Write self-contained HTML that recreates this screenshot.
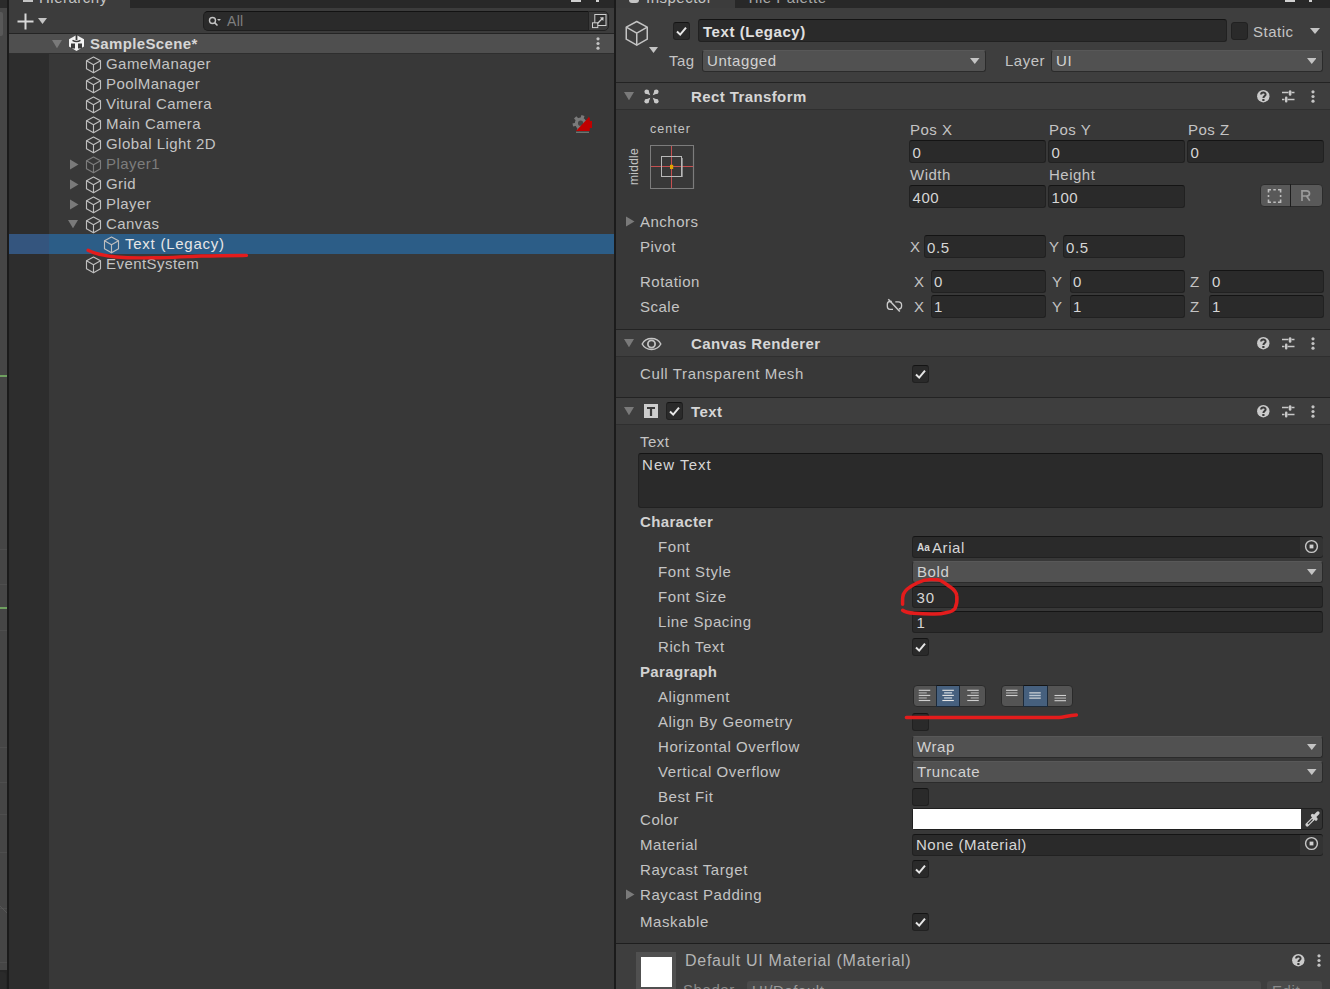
<!DOCTYPE html>
<html><head><meta charset="utf-8"><style>
html,body{margin:0;padding:0;}
body{width:1330px;height:989px;overflow:hidden;position:relative;background:#383838;font-family:"Liberation Sans", sans-serif;}
body>div,body>span,body>svg{position:absolute;}
.t{white-space:nowrap;}
</style></head><body>
<div style="left:0px;top:0px;width:9px;height:989px;background:#1b1b1b;"></div>
<div style="left:0px;top:0px;width:7px;height:989px;background:#464646;"></div>
<div style="left:0px;top:0px;width:7px;height:8px;background:#2b2b2b;"></div>
<div style="left:0px;top:8px;width:7px;height:32px;background:#474747;"></div>
<div style="left:0px;top:12px;width:3px;height:24px;background:#585858;border-radius:0 2px 2px 0;"></div>
<div style="left:0px;top:549px;width:7px;height:1px;background:#4e4e4e;"></div>
<div style="left:0px;top:584px;width:7px;height:1px;background:#4e4e4e;"></div>
<div style="left:0px;top:630px;width:7px;height:1px;background:#4e4e4e;"></div>
<div style="left:0px;top:747px;width:7px;height:1px;background:#4e4e4e;"></div>
<div style="left:0px;top:782px;width:7px;height:1px;background:#4e4e4e;"></div>
<div style="left:0px;top:814px;width:7px;height:1px;background:#4e4e4e;"></div>
<div style="left:0px;top:852px;width:7px;height:1px;background:#4e4e4e;"></div>
<div style="left:0px;top:908px;width:7px;height:1px;background:#4e4e4e;"></div>
<div style="left:0px;top:962px;width:7px;height:1px;background:#4e4e4e;"></div>
<div style="left:0px;top:375px;width:7px;height:1.5px;background:#6fa060;"></div>
<div style="left:0px;top:607px;width:7px;height:1.5px;background:#6fa060;"></div>
<div style="left:0px;top:970px;width:7px;height:19px;background:#262626;"></div>
<div style="left:0px;top:972px;width:6px;height:17px;background:#2a2a2a;border-radius:0 3px 0 0;"></div>
<svg style="left:0px;top:900px;" width="7" height="20" viewBox="0 0 7 20"><path d="M0 6 L7 13" stroke="#595959" stroke-width="0.8"/></svg>
<div style="left:9px;top:0px;width:604.5px;height:989px;background:#383838;"></div>
<div style="left:9px;top:0px;width:604.5px;height:8px;background:#282828;"></div>
<div style="left:9px;top:0px;width:121px;height:8px;background:#3c3c3c;"></div>
<span class="t" style="left:39px;top:-10.58px;font-size:15px;line-height:17.23px;color:#c4c4c4;font-weight:normal;letter-spacing:0.5px;">Hierarchy</span>
<div style="left:23px;top:0px;width:10px;height:2px;background:#c4c4c4;"></div>
<div style="left:571px;top:0px;width:10px;height:2px;background:#d0d0d0;"></div>
<div style="left:596px;top:0px;width:3px;height:2px;background:#d0d0d0;"></div>
<div style="left:9px;top:8px;width:604.5px;height:25px;background:#3c3c3c;"></div>
<svg style="left:17px;top:13px;" width="17" height="17" viewBox="0 0 17 17"><path d="M8.5 0.5 V16.5 M0.5 8.5 H16.5" stroke="#d8d8d8" stroke-width="2"/></svg>
<svg style="left:38px;top:18px;" width="9" height="6" viewBox="0 0 9 6"><path d="M0 0 L9 0 L4.5 6 Z" fill="#c4c4c4"/></svg>
<div style="left:203px;top:11px;width:386px;height:20px;background:#2a2a2a;border:1px solid #1f1f1f;border-top-color:#121212;box-sizing:border-box;border-radius:5px 0 0 5px;"></div>
<div style="left:588px;top:11px;width:21px;height:20px;background:#3a3a3a;border-radius:0 5px 5px 0;border:1px solid #222;box-sizing:border-box;"></div>
<svg style="left:208px;top:16px;" width="14" height="11" viewBox="0 0 14 11"><circle cx="4.5" cy="4.5" r="3" stroke="#c4c4c4" stroke-width="1.4" fill="none"/><path d="M6.6 6.6 L9.5 9.5" stroke="#c4c4c4" stroke-width="1.6"/><path d="M9 3 L13 3 L11 5 Z" fill="#c4c4c4"/></svg>
<span class="t" style="left:227px;top:13.33px;font-size:14px;line-height:16.09px;color:#7f7f7f;font-weight:normal;letter-spacing:0.3px;">All</span>
<svg style="left:591px;top:13px;" width="17" height="17" viewBox="0 0 17 17"><rect x="3.8" y="1.5" width="11.2" height="11" stroke="#cfcfcf" stroke-width="1" fill="#2e2e2e"/><rect x="1.5" y="9.8" width="5.3" height="4.8" stroke="#cfcfcf" stroke-width="1" fill="#3a3a3a"/><path d="M6.5 10.5 L11.8 5" stroke="#cfcfcf" stroke-width="1.2"/><path d="M8.8 4.5 L12.6 4.2 L12.3 8 Z" fill="#cfcfcf"/></svg>
<div style="left:9px;top:32.5px;width:604.5px;height:1.5px;background:#242424;"></div>
<div style="left:9px;top:34px;width:604.5px;height:19px;background:#4f4f4f;"></div>
<div style="left:9px;top:53px;width:604.5px;height:1px;background:#2e2e2e;"></div>
<svg style="left:52px;top:40px;" width="10" height="8" viewBox="0 0 10 8"><path d="M0 0 L10 0 L5 8.3 Z" fill="#7a7a7a"/></svg>
<svg style="left:68px;top:34px;" width="17" height="18" viewBox="0 0 17 18"><path d="M8.5 1 L16 5.3 L16 12.5 L8.5 17 L1 12.5 L1 5.3 Z" fill="#f2f2f2"/><g fill="#3a3a3a"><rect x="7.6" y="0.5" width="1.8" height="5.5"/><rect x="3" y="9.5" width="4" height="5"/><rect x="10" y="9.5" width="4" height="5"/></g><path d="M4.5 6.3 Q8.5 8.6 12.5 6.3" stroke="#3a3a3a" stroke-width="1.5" fill="none"/></svg>
<span class="t" style="left:90px;top:35.12px;font-size:15px;line-height:17.23px;color:#d6d6d6;font-weight:bold;letter-spacing:0.35px;">SampleScene*</span>
<svg style="left:596px;top:37px;" width="4" height="13" viewBox="0 0 4 13"><g fill="#c4c4c4"><circle cx="2" cy="1.8" r="1.6"/><circle cx="2" cy="6.5" r="1.6"/><circle cx="2" cy="11.2" r="1.6"/></g></svg>
<div style="left:9px;top:54px;width:40px;height:935px;background:#2d2d2d;"></div>
<svg style="left:84.6px;top:55.6px;" width="17.0" height="18.0" viewBox="0 0 17.0 18.0"><g transform="scale(1.0)" fill="none" stroke="#bfbfbf" stroke-width="1.15" stroke-linejoin="round"><path d="M8.5 1 L15.5 4.8 L15.5 12.8 L8.5 16.8 L1.5 12.8 L1.5 4.8 Z"/><path d="M1.5 4.8 L8.5 8.8 L15.5 4.8 M8.5 8.8 L8.5 16.8"/></g></svg>
<span class="t" style="left:106px;top:55.42px;font-size:15px;line-height:17.23px;color:#c4c4c4;font-weight:normal;letter-spacing:0.45px;">GameManager</span>
<svg style="left:84.6px;top:75.6px;" width="17.0" height="18.0" viewBox="0 0 17.0 18.0"><g transform="scale(1.0)" fill="none" stroke="#bfbfbf" stroke-width="1.15" stroke-linejoin="round"><path d="M8.5 1 L15.5 4.8 L15.5 12.8 L8.5 16.8 L1.5 12.8 L1.5 4.8 Z"/><path d="M1.5 4.8 L8.5 8.8 L15.5 4.8 M8.5 8.8 L8.5 16.8"/></g></svg>
<span class="t" style="left:106px;top:75.42px;font-size:15px;line-height:17.23px;color:#c4c4c4;font-weight:normal;letter-spacing:0.45px;">PoolManager</span>
<svg style="left:84.6px;top:95.6px;" width="17.0" height="18.0" viewBox="0 0 17.0 18.0"><g transform="scale(1.0)" fill="none" stroke="#bfbfbf" stroke-width="1.15" stroke-linejoin="round"><path d="M8.5 1 L15.5 4.8 L15.5 12.8 L8.5 16.8 L1.5 12.8 L1.5 4.8 Z"/><path d="M1.5 4.8 L8.5 8.8 L15.5 4.8 M8.5 8.8 L8.5 16.8"/></g></svg>
<span class="t" style="left:106px;top:95.42px;font-size:15px;line-height:17.23px;color:#c4c4c4;font-weight:normal;letter-spacing:0.45px;">Vitural Camera</span>
<svg style="left:84.6px;top:115.6px;" width="17.0" height="18.0" viewBox="0 0 17.0 18.0"><g transform="scale(1.0)" fill="none" stroke="#bfbfbf" stroke-width="1.15" stroke-linejoin="round"><path d="M8.5 1 L15.5 4.8 L15.5 12.8 L8.5 16.8 L1.5 12.8 L1.5 4.8 Z"/><path d="M1.5 4.8 L8.5 8.8 L15.5 4.8 M8.5 8.8 L8.5 16.8"/></g></svg>
<span class="t" style="left:106px;top:115.42px;font-size:15px;line-height:17.23px;color:#c4c4c4;font-weight:normal;letter-spacing:0.45px;">Main Camera</span>
<svg style="left:84.6px;top:135.6px;" width="17.0" height="18.0" viewBox="0 0 17.0 18.0"><g transform="scale(1.0)" fill="none" stroke="#bfbfbf" stroke-width="1.15" stroke-linejoin="round"><path d="M8.5 1 L15.5 4.8 L15.5 12.8 L8.5 16.8 L1.5 12.8 L1.5 4.8 Z"/><path d="M1.5 4.8 L8.5 8.8 L15.5 4.8 M8.5 8.8 L8.5 16.8"/></g></svg>
<span class="t" style="left:106px;top:135.43px;font-size:15px;line-height:17.23px;color:#c4c4c4;font-weight:normal;letter-spacing:0.45px;">Global Light 2D</span>
<svg style="left:70px;top:159px;" width="9" height="11" viewBox="0 0 9 11"><path d="M0 0.5 L8.5 5.5 L0 10.5 Z" fill="#7a7a7a"/></svg>
<svg style="left:84.6px;top:155.6px;" width="17.0" height="18.0" viewBox="0 0 17.0 18.0"><g transform="scale(1.0)" fill="none" stroke="#7d7d7d" stroke-width="1.15" stroke-linejoin="round"><path d="M8.5 1 L15.5 4.8 L15.5 12.8 L8.5 16.8 L1.5 12.8 L1.5 4.8 Z"/><path d="M1.5 4.8 L8.5 8.8 L15.5 4.8 M8.5 8.8 L8.5 16.8"/></g></svg>
<span class="t" style="left:106px;top:155.43px;font-size:15px;line-height:17.23px;color:#7d7d7d;font-weight:normal;letter-spacing:0.45px;">Player1</span>
<svg style="left:70px;top:179px;" width="9" height="11" viewBox="0 0 9 11"><path d="M0 0.5 L8.5 5.5 L0 10.5 Z" fill="#7a7a7a"/></svg>
<svg style="left:84.6px;top:175.6px;" width="17.0" height="18.0" viewBox="0 0 17.0 18.0"><g transform="scale(1.0)" fill="none" stroke="#bfbfbf" stroke-width="1.15" stroke-linejoin="round"><path d="M8.5 1 L15.5 4.8 L15.5 12.8 L8.5 16.8 L1.5 12.8 L1.5 4.8 Z"/><path d="M1.5 4.8 L8.5 8.8 L15.5 4.8 M8.5 8.8 L8.5 16.8"/></g></svg>
<span class="t" style="left:106px;top:175.43px;font-size:15px;line-height:17.23px;color:#c4c4c4;font-weight:normal;letter-spacing:0.45px;">Grid</span>
<svg style="left:70px;top:199px;" width="9" height="11" viewBox="0 0 9 11"><path d="M0 0.5 L8.5 5.5 L0 10.5 Z" fill="#7a7a7a"/></svg>
<svg style="left:84.6px;top:195.6px;" width="17.0" height="18.0" viewBox="0 0 17.0 18.0"><g transform="scale(1.0)" fill="none" stroke="#bfbfbf" stroke-width="1.15" stroke-linejoin="round"><path d="M8.5 1 L15.5 4.8 L15.5 12.8 L8.5 16.8 L1.5 12.8 L1.5 4.8 Z"/><path d="M1.5 4.8 L8.5 8.8 L15.5 4.8 M8.5 8.8 L8.5 16.8"/></g></svg>
<span class="t" style="left:106px;top:195.43px;font-size:15px;line-height:17.23px;color:#c4c4c4;font-weight:normal;letter-spacing:0.45px;">Player</span>
<svg style="left:68px;top:220px;" width="10" height="8" viewBox="0 0 10 8"><path d="M0 0 L10 0 L5 8.3 Z" fill="#7a7a7a"/></svg>
<svg style="left:84.6px;top:215.6px;" width="17.0" height="18.0" viewBox="0 0 17.0 18.0"><g transform="scale(1.0)" fill="none" stroke="#bfbfbf" stroke-width="1.15" stroke-linejoin="round"><path d="M8.5 1 L15.5 4.8 L15.5 12.8 L8.5 16.8 L1.5 12.8 L1.5 4.8 Z"/><path d="M1.5 4.8 L8.5 8.8 L15.5 4.8 M8.5 8.8 L8.5 16.8"/></g></svg>
<span class="t" style="left:106px;top:215.43px;font-size:15px;line-height:17.23px;color:#c4c4c4;font-weight:normal;letter-spacing:0.45px;">Canvas</span>
<div style="left:9px;top:234px;width:604.5px;height:20px;background:#2c5d87;"></div>
<div style="left:9px;top:234px;width:40px;height:20px;background:#34557e;"></div>
<svg style="left:102.6px;top:235.6px;" width="17.0" height="18.0" viewBox="0 0 17.0 18.0"><g transform="scale(1.0)" fill="none" stroke="#bfbfbf" stroke-width="1.15" stroke-linejoin="round"><path d="M8.5 1 L15.5 4.8 L15.5 12.8 L8.5 16.8 L1.5 12.8 L1.5 4.8 Z"/><path d="M1.5 4.8 L8.5 8.8 L15.5 4.8 M8.5 8.8 L8.5 16.8"/></g></svg>
<span class="t" style="left:125px;top:235.43px;font-size:15px;line-height:17.23px;color:#e6e6e6;font-weight:normal;letter-spacing:0.75px;">Text (Legacy)</span>
<svg style="left:84.6px;top:255.6px;" width="17.0" height="18.0" viewBox="0 0 17.0 18.0"><g transform="scale(1.0)" fill="none" stroke="#bfbfbf" stroke-width="1.15" stroke-linejoin="round"><path d="M8.5 1 L15.5 4.8 L15.5 12.8 L8.5 16.8 L1.5 12.8 L1.5 4.8 Z"/><path d="M1.5 4.8 L8.5 8.8 L15.5 4.8 M8.5 8.8 L8.5 16.8"/></g></svg>
<span class="t" style="left:106px;top:255.43px;font-size:15px;line-height:17.23px;color:#c4c4c4;font-weight:normal;letter-spacing:0.45px;">EventSystem</span>
<svg style="left:570px;top:112px;" width="25" height="24" viewBox="0 0 25 24"><g transform="translate(10.6 11.2)" fill="#7a7a7a"><circle r="5.8"/><rect x="-1.6" y="-8" width="3.2" height="3.5" transform="rotate(17.188733853924695)"/><rect x="-1.6" y="-8" width="3.2" height="3.5" transform="rotate(77.18873385392469)"/><rect x="-1.6" y="-8" width="3.2" height="3.5" transform="rotate(137.18873385392467)"/><rect x="-1.6" y="-8" width="3.2" height="3.5" transform="rotate(197.18873385392467)"/><rect x="-1.6" y="-8" width="3.2" height="3.5" transform="rotate(257.18873385392465)"/><rect x="-1.6" y="-8" width="3.2" height="3.5" transform="rotate(317.1887338539247)"/></g><circle cx="10.6" cy="11.2" r="2.6" fill="#454545"/><path d="M6 19 L18.5 5.6 L18.5 4.6 L19.8 6 L19.8 9 L22 9 L22 16 L19.8 16 L19.8 19 Z" fill="#c00000"/><path d="M6 20.3 H19" stroke="#6e7470" stroke-width="1.4"/></svg>
<svg style="left:0px;top:0px;pointer-events:none;" width="1330" height="989" viewBox="0 0 1330 989"><path d="M88.1 250.3 C 95 254, 110 257, 127.4 257.7 C 140 258, 150 257.8, 161.2 257.7 C 180 257.2, 190 256.4, 201.8 256 C 220 255.6, 235 255.5, 246.4 255.4" stroke="#e41c1c" stroke-width="3.4" fill="none" stroke-linecap="round"/></svg>
<div style="left:613.5px;top:0px;width:2.5px;height:989px;background:#1b1b1b;"></div>
<div style="left:616px;top:0px;width:714px;height:989px;background:#383838;"></div>
<div style="left:616px;top:0px;width:714px;height:8px;background:#282828;"></div>
<div style="left:616px;top:0px;width:119px;height:8px;background:#3c3c3c;"></div>
<span class="t" style="left:646px;top:-10.58px;font-size:15px;line-height:17.23px;color:#c4c4c4;font-weight:normal;letter-spacing:0.5px;">Inspector</span>
<div style="left:629px;top:0px;width:10px;height:3px;background:#c4c4c4;border-radius:0 0 5px 5px;"></div>
<span class="t" style="left:746px;top:-10.58px;font-size:15px;line-height:17.23px;color:#a8a8a8;font-weight:normal;letter-spacing:0.5px;">Tile Palette</span>
<div style="left:1285px;top:0px;width:10px;height:2px;background:#d0d0d0;"></div>
<div style="left:1309px;top:0px;width:3px;height:2px;background:#d0d0d0;"></div>
<div style="left:616px;top:8px;width:714px;height:74px;background:#3e3e3e;"></div>
<svg style="left:624px;top:20px;" width="25.5" height="27.0" viewBox="0 0 25.5 27.0"><g transform="scale(1.5)" fill="none" stroke="#c4c4c4" stroke-width="1.0" stroke-linejoin="round"><path d="M8.5 1 L15.5 4.8 L15.5 12.8 L8.5 16.8 L1.5 12.8 L1.5 4.8 Z"/><path d="M1.5 4.8 L8.5 8.8 L15.5 4.8 M8.5 8.8 L8.5 16.8"/></g></svg>
<svg style="left:649px;top:47px;" width="9" height="6" viewBox="0 0 9 6"><path d="M0 0 L9 0 L4.5 6 Z" fill="#c4c4c4"/></svg>
<div style="left:673px;top:22px;width:17px;height:18px;background:#2a2a2a;border:1px solid #212121;border-top-color:#141414;box-sizing:border-box;border-radius:3px;"></div>
<svg style="left:673px;top:22px;" width="17" height="18" viewBox="0 0 17 18"><path d="M4 9.5 L7.2 12.6 L13 5.6" stroke="#e6e6e6" stroke-width="2" fill="none"/></svg>
<div style="left:698px;top:19px;width:529px;height:22.5px;background:#2a2a2a;border:1px solid #212121;border-top-color:#141414;box-sizing:border-box;border-radius:3px;"></div>
<span class="t" style="left:703px;top:23.42px;font-size:15px;line-height:17.23px;color:#e0e0e0;font-weight:bold;letter-spacing:0.55px;">Text (Legacy)</span>
<div style="left:1231px;top:22px;width:17px;height:18px;background:#2a2a2a;border:1px solid #212121;box-sizing:border-box;border-radius:3px;"></div>
<span class="t" style="left:1253px;top:23.42px;font-size:15px;line-height:17.23px;color:#c4c4c4;font-weight:normal;letter-spacing:0.5px;">Static</span>
<svg style="left:1310px;top:28px;" width="10" height="6" viewBox="0 0 10 6"><path d="M0 0 L10 0 L5.0 6 Z" fill="#c4c4c4"/></svg>
<span class="t" style="left:669px;top:52.42px;font-size:15px;line-height:17.23px;color:#c4c4c4;font-weight:normal;letter-spacing:0.5px;">Tag</span>
<div style="left:702px;top:50px;width:284px;height:21.5px;background:#515151;border:1px solid #2b2b2b;box-sizing:border-box;border-radius:3px;border-top-color:#585858;"></div>
<svg style="left:970px;top:57.75px;" width="9.5" height="6" viewBox="0 0 9.5 6"><path d="M0 0 L9.5 0 L4.75 6 Z" fill="#c4c4c4"/></svg>
<span class="t" style="left:707px;top:52.42px;font-size:15px;line-height:17.23px;color:#d2d2d2;font-weight:normal;letter-spacing:0.58px;">Untagged</span>
<span class="t" style="left:1005px;top:52.42px;font-size:15px;line-height:17.23px;color:#c4c4c4;font-weight:normal;letter-spacing:0.5px;">Layer</span>
<div style="left:1051px;top:50px;width:271.5px;height:21.5px;background:#515151;border:1px solid #2b2b2b;box-sizing:border-box;border-radius:3px;border-top-color:#585858;"></div>
<svg style="left:1306.5px;top:57.75px;" width="9.5" height="6" viewBox="0 0 9.5 6"><path d="M0 0 L9.5 0 L4.75 6 Z" fill="#c4c4c4"/></svg>
<span class="t" style="left:1056px;top:52.42px;font-size:15px;line-height:17.23px;color:#d2d2d2;font-weight:normal;letter-spacing:0.58px;">UI</span>
<div style="left:616px;top:82px;width:714px;height:1px;background:#232323;"></div>
<div style="left:616px;top:83px;width:714px;height:27px;background:#3e3e3e;"></div>
<div style="left:616px;top:109px;width:714px;height:1px;background:#2f2f2f;"></div>
<svg style="left:624px;top:92px;" width="10" height="8" viewBox="0 0 10 8"><path d="M0 0 L10 0 L5 8.3 Z" fill="#7a7a7a"/></svg>
<svg style="left:643.6px;top:88.6px;" width="15" height="15" viewBox="0 0 15 15"><g fill="#c8c8c8"><circle cx="2.7" cy="2.7" r="2.3"/><path d="M1.1443650813895956 4.255634918610404 L6.3 6.3 L4.255634918610404 1.1443650813895956 Z"/><circle cx="12.3" cy="2.7" r="2.3"/><path d="M10.744365081389596 1.1443650813895951 L8.7 6.3 L13.855634918610406 4.255634918610405 Z"/><circle cx="2.7" cy="12.3" r="2.3"/><path d="M4.255634918610405 13.855634918610406 L6.3 8.7 L1.1443650813895951 10.744365081389596 Z"/><circle cx="12.3" cy="12.3" r="2.3"/><path d="M13.855634918610406 10.744365081389596 L8.7 8.7 L10.744365081389596 13.855634918610406 Z"/></g></svg>
<span class="t" style="left:691px;top:88.42px;font-size:15px;line-height:17.23px;color:#d6d6d6;font-weight:bold;letter-spacing:0.4px;">Rect Transform</span>
<svg style="left:1257px;top:90px;" width="13" height="13" viewBox="0 0 13 13"><circle cx="6.3" cy="6.2" r="6.2" fill="#cacaca"/><path d="M4.1 4.6 C4.1 1.9 8.6 1.9 8.6 4.4 C8.6 6 6.4 6 6.4 8" stroke="#3a3a3a" stroke-width="2" fill="none"/><rect x="5.3" y="9" width="2.2" height="2" fill="#3a3a3a"/></svg>
<svg style="left:1282px;top:90px;" width="13" height="13" viewBox="0 0 13 13"><g fill="#c8c8c8"><path d="M0 2.5 H6.5 M9.5 2.5 H12.5 M0 9.5 H2.5 M5.5 9.5 H12.5" stroke="#c8c8c8" stroke-width="1.5"/><rect x="6.8" y="0.2" width="2.6" height="5.6" rx="1.2"/><rect x="3" y="6.4" width="2.4" height="6" rx="1"/></g></svg>
<svg style="left:1311px;top:90px;" width="4" height="13" viewBox="0 0 4 13"><g fill="#c4c4c4"><circle cx="2" cy="1.8" r="1.6"/><circle cx="2" cy="6.5" r="1.6"/><circle cx="2" cy="11.2" r="1.6"/></g></svg>
<span class="t" style="left:650px;top:122.19px;font-size:12.5px;line-height:14.36px;color:#c4c4c4;font-weight:normal;letter-spacing:1.05px;">center</span>
<span class="t" style="left:604.4px;top:160.3px;width:60px;text-align:center;font-size:12px;line-height:13px;color:#c4c4c4;letter-spacing:0.25px;transform:rotate(-90deg);">middle</span>
<svg style="left:650px;top:145px;" width="45" height="45" viewBox="0 0 45 45"><rect x="0.5" y="0.5" width="43" height="43" stroke="#7c7c7c" fill="none"/><path d="M43.5 3 V44" stroke="#7c7c7c" stroke-width="1.2"/><path d="M21.5 1 V43 M1 21.5 H43" stroke="#c65050" stroke-width="1"/><rect x="11.5" y="11.5" width="20" height="20" stroke="#b8b8b8" stroke-width="1" fill="none"/><path d="M32 13 V32" stroke="#b8b8b8" stroke-width="1.3"/><rect x="20" y="19.8" width="3.2" height="4.2" fill="#e2a200"/></svg>
<span class="t" style="left:910px;top:121.23px;font-size:15px;line-height:17.23px;color:#c4c4c4;font-weight:normal;letter-spacing:0.5px;">Pos X</span>
<span class="t" style="left:1049px;top:121.23px;font-size:15px;line-height:17.23px;color:#c4c4c4;font-weight:normal;letter-spacing:0.5px;">Pos Y</span>
<span class="t" style="left:1188px;top:121.23px;font-size:15px;line-height:17.23px;color:#c4c4c4;font-weight:normal;letter-spacing:0.5px;">Pos Z</span>
<div style="left:909px;top:140px;width:136.5px;height:22.5px;background:#2a2a2a;border:1px solid #212121;border-top-color:#141414;box-sizing:border-box;border-radius:3px;"></div>
<span class="t" style="left:912.5px;top:144.43px;font-size:15px;line-height:17.23px;color:#d6d6d6;font-weight:normal;letter-spacing:0.58px;">0</span>
<div style="left:1048px;top:140px;width:136.5px;height:22.5px;background:#2a2a2a;border:1px solid #212121;border-top-color:#141414;box-sizing:border-box;border-radius:3px;"></div>
<span class="t" style="left:1051.5px;top:144.43px;font-size:15px;line-height:17.23px;color:#d6d6d6;font-weight:normal;letter-spacing:0.58px;">0</span>
<div style="left:1187px;top:140px;width:136.5px;height:22.5px;background:#2a2a2a;border:1px solid #212121;border-top-color:#141414;box-sizing:border-box;border-radius:3px;"></div>
<span class="t" style="left:1190.5px;top:144.43px;font-size:15px;line-height:17.23px;color:#d6d6d6;font-weight:normal;letter-spacing:0.58px;">0</span>
<span class="t" style="left:910px;top:166.23px;font-size:15px;line-height:17.23px;color:#c4c4c4;font-weight:normal;letter-spacing:0.5px;">Width</span>
<span class="t" style="left:1049px;top:166.23px;font-size:15px;line-height:17.23px;color:#c4c4c4;font-weight:normal;letter-spacing:0.5px;">Height</span>
<div style="left:909px;top:185px;width:136.5px;height:23px;background:#2a2a2a;border:1px solid #212121;border-top-color:#141414;box-sizing:border-box;border-radius:3px;"></div>
<span class="t" style="left:912.5px;top:189.43px;font-size:15px;line-height:17.23px;color:#d6d6d6;font-weight:normal;letter-spacing:0.58px;">400</span>
<div style="left:1048px;top:185px;width:136.5px;height:23px;background:#2a2a2a;border:1px solid #212121;border-top-color:#141414;box-sizing:border-box;border-radius:3px;"></div>
<span class="t" style="left:1051.5px;top:189.43px;font-size:15px;line-height:17.23px;color:#d6d6d6;font-weight:normal;letter-spacing:0.58px;">100</span>
<div style="left:1260px;top:183.6px;width:63.2px;height:23.6px;background:#595959;border-radius:4px;border:1px solid #2c2c2c;box-sizing:border-box;"></div>
<div style="left:1289.5px;top:184px;width:1.1px;height:23px;background:#1e1e1e;"></div>
<svg style="left:1266px;top:188px;" width="17" height="16" viewBox="0 0 17 16"><g stroke="#bdbdbd" stroke-width="1.6" fill="none"><path d="M2.5 4.5 V1.8 H5"/><path d="M12 1.8 H14.6 V4.5"/><path d="M14.6 11.5 V14.2 H12"/><path d="M5 14.2 H2.5 V11.5"/><path d="M7.3 1.8 H9.8 M7.3 14.2 H9.8 M2.5 7 V9 M14.6 7 V9"/></g></svg>
<svg style="left:1298px;top:188px;" width="16" height="16" viewBox="0 0 16 16"><path d="M4 13 V2.8 H8.5 Q11.5 2.8 11.5 5.5 Q11.5 8 8.5 8 H4 M8.5 8 L11.8 12.8" stroke="#9c9c9c" stroke-width="1.7" fill="none"/></svg>
<svg style="left:626px;top:216px;" width="9" height="11" viewBox="0 0 9 11"><path d="M0 0.5 L8.5 5.5 L0 10.5 Z" fill="#7a7a7a"/></svg>
<span class="t" style="left:640px;top:213.43px;font-size:15px;line-height:17.23px;color:#c4c4c4;font-weight:normal;letter-spacing:0.5px;">Anchors</span>
<span class="t" style="left:640px;top:238.43px;font-size:15px;line-height:17.23px;color:#c4c4c4;font-weight:normal;letter-spacing:0.5px;">Pivot</span>
<span class="t" style="left:910px;top:238.43px;font-size:15px;line-height:17.23px;color:#c4c4c4;font-weight:normal;letter-spacing:0.3px;">X</span>
<div style="left:924px;top:235px;width:121.5px;height:22.5px;background:#2a2a2a;border:1px solid #212121;border-top-color:#141414;box-sizing:border-box;border-radius:3px;"></div>
<span class="t" style="left:927px;top:239.03px;font-size:15px;line-height:17.23px;color:#d6d6d6;font-weight:normal;letter-spacing:0.58px;">0.5</span>
<span class="t" style="left:1049px;top:238.43px;font-size:15px;line-height:17.23px;color:#c4c4c4;font-weight:normal;letter-spacing:0.3px;">Y</span>
<div style="left:1063px;top:235px;width:121.5px;height:22.5px;background:#2a2a2a;border:1px solid #212121;border-top-color:#141414;box-sizing:border-box;border-radius:3px;"></div>
<span class="t" style="left:1066px;top:239.03px;font-size:15px;line-height:17.23px;color:#d6d6d6;font-weight:normal;letter-spacing:0.58px;">0.5</span>
<span class="t" style="left:640px;top:273.43px;font-size:15px;line-height:17.23px;color:#c4c4c4;font-weight:normal;letter-spacing:0.5px;">Rotation</span>
<span class="t" style="left:640px;top:298.43px;font-size:15px;line-height:17.23px;color:#c4c4c4;font-weight:normal;letter-spacing:0.5px;">Scale</span>
<span class="t" style="left:914px;top:273.43px;font-size:15px;line-height:17.23px;color:#c4c4c4;font-weight:normal;letter-spacing:0.3px;">X</span>
<div style="left:931px;top:270px;width:114.5px;height:22.5px;background:#2a2a2a;border:1px solid #212121;border-top-color:#141414;box-sizing:border-box;border-radius:3px;"></div>
<span class="t" style="left:934px;top:273.43px;font-size:15px;line-height:17.23px;color:#d6d6d6;font-weight:normal;letter-spacing:0.58px;">0</span>
<span class="t" style="left:1052px;top:273.43px;font-size:15px;line-height:17.23px;color:#c4c4c4;font-weight:normal;letter-spacing:0.3px;">Y</span>
<div style="left:1070px;top:270px;width:114.5px;height:22.5px;background:#2a2a2a;border:1px solid #212121;border-top-color:#141414;box-sizing:border-box;border-radius:3px;"></div>
<span class="t" style="left:1073px;top:273.43px;font-size:15px;line-height:17.23px;color:#d6d6d6;font-weight:normal;letter-spacing:0.58px;">0</span>
<span class="t" style="left:1190px;top:273.43px;font-size:15px;line-height:17.23px;color:#c4c4c4;font-weight:normal;letter-spacing:0.3px;">Z</span>
<div style="left:1209px;top:270px;width:114.5px;height:22.5px;background:#2a2a2a;border:1px solid #212121;border-top-color:#141414;box-sizing:border-box;border-radius:3px;"></div>
<span class="t" style="left:1212px;top:273.43px;font-size:15px;line-height:17.23px;color:#d6d6d6;font-weight:normal;letter-spacing:0.58px;">0</span>
<span class="t" style="left:914px;top:298.43px;font-size:15px;line-height:17.23px;color:#c4c4c4;font-weight:normal;letter-spacing:0.3px;">X</span>
<div style="left:931px;top:295px;width:114.5px;height:22.5px;background:#2a2a2a;border:1px solid #212121;border-top-color:#141414;box-sizing:border-box;border-radius:3px;"></div>
<span class="t" style="left:934px;top:298.43px;font-size:15px;line-height:17.23px;color:#d6d6d6;font-weight:normal;letter-spacing:0.58px;">1</span>
<span class="t" style="left:1052px;top:298.43px;font-size:15px;line-height:17.23px;color:#c4c4c4;font-weight:normal;letter-spacing:0.3px;">Y</span>
<div style="left:1070px;top:295px;width:114.5px;height:22.5px;background:#2a2a2a;border:1px solid #212121;border-top-color:#141414;box-sizing:border-box;border-radius:3px;"></div>
<span class="t" style="left:1073px;top:298.43px;font-size:15px;line-height:17.23px;color:#d6d6d6;font-weight:normal;letter-spacing:0.58px;">1</span>
<span class="t" style="left:1190px;top:298.43px;font-size:15px;line-height:17.23px;color:#c4c4c4;font-weight:normal;letter-spacing:0.3px;">Z</span>
<div style="left:1209px;top:295px;width:114.5px;height:22.5px;background:#2a2a2a;border:1px solid #212121;border-top-color:#141414;box-sizing:border-box;border-radius:3px;"></div>
<span class="t" style="left:1212px;top:298.43px;font-size:15px;line-height:17.23px;color:#d6d6d6;font-weight:normal;letter-spacing:0.58px;">1</span>
<svg style="left:880px;top:295px;" width="30" height="23" viewBox="0 0 30 23"><g stroke="#cccccc" fill="none" stroke-width="1.3"><path d="M8.3 4.3 L19.8 16.5" stroke-width="1.5"/><path d="M11.8 6.5 H10 Q7.3 6.5 7.3 9.5 V11 Q7.3 14.3 10 14.3 H13"/><path d="M15.3 6.9 H18.3 Q21.6 6.9 21.6 10.3 V11 Q21.6 14 18.8 14"/></g></svg>
<div style="left:616px;top:329px;width:714px;height:1px;background:#232323;"></div>
<div style="left:616px;top:330px;width:714px;height:27px;background:#3e3e3e;"></div>
<div style="left:616px;top:356px;width:714px;height:1px;background:#2f2f2f;"></div>
<svg style="left:624px;top:339px;" width="10" height="8" viewBox="0 0 10 8"><path d="M0 0 L10 0 L5 8.3 Z" fill="#7a7a7a"/></svg>
<svg style="left:640.5px;top:336px;" width="21" height="16" viewBox="0 0 21 16"><path d="M1.2 8 C5 0.8 16 0.8 19.8 8 C16 15.2 5 15.2 1.2 8 Z" stroke="#c4c4c4" stroke-width="1.5" fill="none"/><circle cx="10.5" cy="8" r="3.6" stroke="#c4c4c4" stroke-width="1.8" fill="none"/></svg>
<span class="t" style="left:691px;top:335.43px;font-size:15px;line-height:17.23px;color:#d6d6d6;font-weight:bold;letter-spacing:0.4px;">Canvas Renderer</span>
<svg style="left:1257px;top:337px;" width="13" height="13" viewBox="0 0 13 13"><circle cx="6.3" cy="6.2" r="6.2" fill="#cacaca"/><path d="M4.1 4.6 C4.1 1.9 8.6 1.9 8.6 4.4 C8.6 6 6.4 6 6.4 8" stroke="#3a3a3a" stroke-width="2" fill="none"/><rect x="5.3" y="9" width="2.2" height="2" fill="#3a3a3a"/></svg>
<svg style="left:1282px;top:337px;" width="13" height="13" viewBox="0 0 13 13"><g fill="#c8c8c8"><path d="M0 2.5 H6.5 M9.5 2.5 H12.5 M0 9.5 H2.5 M5.5 9.5 H12.5" stroke="#c8c8c8" stroke-width="1.5"/><rect x="6.8" y="0.2" width="2.6" height="5.6" rx="1.2"/><rect x="3" y="6.4" width="2.4" height="6" rx="1"/></g></svg>
<svg style="left:1311px;top:337px;" width="4" height="13" viewBox="0 0 4 13"><g fill="#c4c4c4"><circle cx="2" cy="1.8" r="1.6"/><circle cx="2" cy="6.5" r="1.6"/><circle cx="2" cy="11.2" r="1.6"/></g></svg>
<span class="t" style="left:640px;top:365.43px;font-size:15px;line-height:17.23px;color:#c4c4c4;font-weight:normal;letter-spacing:0.62px;">Cull Transparent Mesh</span>
<div style="left:912px;top:365px;width:17px;height:18px;background:#2a2a2a;border:1px solid #212121;border-top-color:#141414;box-sizing:border-box;border-radius:3px;"></div>
<svg style="left:912px;top:365px;" width="17" height="18" viewBox="0 0 17 18"><path d="M4 9.5 L7.2 12.6 L13 5.6" stroke="#e6e6e6" stroke-width="2" fill="none"/></svg>
<div style="left:616px;top:397px;width:714px;height:1px;background:#232323;"></div>
<div style="left:616px;top:398px;width:714px;height:27px;background:#3e3e3e;"></div>
<div style="left:616px;top:424px;width:714px;height:1px;background:#2f2f2f;"></div>
<svg style="left:624px;top:407px;" width="10" height="8" viewBox="0 0 10 8"><path d="M0 0 L10 0 L5 8.3 Z" fill="#7a7a7a"/></svg>
<svg style="left:644px;top:404px;" width="14" height="14" viewBox="0 0 14 14"><rect x="0" y="0" width="14" height="14" fill="#cdcdcd"/><path d="M3 4 H11 M7 4 V12" stroke="#3a3a3a" stroke-width="2.2" fill="none"/></svg>
<div style="left:666px;top:402.3px;width:17px;height:17.5px;background:#2a2a2a;border:1px solid #212121;border-top-color:#141414;box-sizing:border-box;border-radius:3px;"></div>
<svg style="left:666px;top:402.3px;" width="17" height="17.5" viewBox="0 0 17 17.5"><path d="M4 9.5 L7.2 12.6 L13 5.6" stroke="#e6e6e6" stroke-width="2" fill="none"/></svg>
<span class="t" style="left:691px;top:403.43px;font-size:15px;line-height:17.23px;color:#d6d6d6;font-weight:bold;letter-spacing:0.4px;">Text</span>
<svg style="left:1257px;top:405px;" width="13" height="13" viewBox="0 0 13 13"><circle cx="6.3" cy="6.2" r="6.2" fill="#cacaca"/><path d="M4.1 4.6 C4.1 1.9 8.6 1.9 8.6 4.4 C8.6 6 6.4 6 6.4 8" stroke="#3a3a3a" stroke-width="2" fill="none"/><rect x="5.3" y="9" width="2.2" height="2" fill="#3a3a3a"/></svg>
<svg style="left:1282px;top:405px;" width="13" height="13" viewBox="0 0 13 13"><g fill="#c8c8c8"><path d="M0 2.5 H6.5 M9.5 2.5 H12.5 M0 9.5 H2.5 M5.5 9.5 H12.5" stroke="#c8c8c8" stroke-width="1.5"/><rect x="6.8" y="0.2" width="2.6" height="5.6" rx="1.2"/><rect x="3" y="6.4" width="2.4" height="6" rx="1"/></g></svg>
<svg style="left:1311px;top:405px;" width="4" height="13" viewBox="0 0 4 13"><g fill="#c4c4c4"><circle cx="2" cy="1.8" r="1.6"/><circle cx="2" cy="6.5" r="1.6"/><circle cx="2" cy="11.2" r="1.6"/></g></svg>
<span class="t" style="left:640px;top:433.43px;font-size:15px;line-height:17.23px;color:#c4c4c4;font-weight:normal;letter-spacing:0.5px;">Text</span>
<div style="left:638px;top:453px;width:685px;height:55px;background:#2a2a2a;border:1px solid #212121;border-top-color:#141414;box-sizing:border-box;border-radius:3px;"></div>
<span class="t" style="left:642px;top:456.43px;font-size:15px;line-height:17.23px;color:#d6d6d6;font-weight:normal;letter-spacing:1.05px;">New Text</span>
<span class="t" style="left:640px;top:513.42px;font-size:15px;line-height:17.23px;color:#d2d2d2;font-weight:bold;letter-spacing:0.35px;">Character</span>
<span class="t" style="left:658px;top:538.42px;font-size:15px;line-height:17.23px;color:#c4c4c4;font-weight:normal;letter-spacing:0.58px;">Font</span>
<div style="left:912px;top:535.5px;width:411px;height:22px;background:#2a2a2a;border:1px solid #212121;border-top-color:#141414;box-sizing:border-box;border-radius:3px;"></div>
<div style="left:1300px;top:536.5px;width:22.5px;height:20px;background:#333333;border-radius:0 3px 3px 0;"></div>
<svg style="left:1304px;top:539px;" width="15" height="15" viewBox="0 0 15 15"><circle cx="7.5" cy="7.5" r="5.9" stroke="#c8c8c8" stroke-width="1.4" fill="none"/><rect x="5.6" y="5.6" width="3.8" height="3.8" fill="#d0d0d0"/></svg>
<span class="t" style="left:917px;top:541.95px;font-size:10px;line-height:11.49px;color:#d6d6d6;font-weight:bold;letter-spacing:0px;">Aa</span>
<span class="t" style="left:932px;top:539.42px;font-size:15px;line-height:17.23px;color:#d6d6d6;font-weight:normal;letter-spacing:0.58px;">Arial</span>
<span class="t" style="left:658px;top:563.42px;font-size:15px;line-height:17.23px;color:#c4c4c4;font-weight:normal;letter-spacing:0.58px;">Font Style</span>
<div style="left:912px;top:561px;width:411px;height:21.5px;background:#515151;border:1px solid #2b2b2b;box-sizing:border-box;border-radius:3px;border-top-color:#585858;"></div>
<svg style="left:1307px;top:568.75px;" width="9.5" height="6" viewBox="0 0 9.5 6"><path d="M0 0 L9.5 0 L4.75 6 Z" fill="#c4c4c4"/></svg>
<span class="t" style="left:917px;top:563.42px;font-size:15px;line-height:17.23px;color:#d2d2d2;font-weight:normal;letter-spacing:0.58px;">Bold</span>
<span class="t" style="left:658px;top:588.42px;font-size:15px;line-height:17.23px;color:#c4c4c4;font-weight:normal;letter-spacing:0.58px;">Font Size</span>
<div style="left:912px;top:585.6px;width:411px;height:22px;background:#2a2a2a;border:1px solid #212121;border-top-color:#141414;box-sizing:border-box;border-radius:3px;"></div>
<span class="t" style="left:916.5px;top:589.42px;font-size:15px;line-height:17.23px;color:#d6d6d6;font-weight:normal;letter-spacing:0.9px;">30</span>
<span class="t" style="left:658px;top:613.42px;font-size:15px;line-height:17.23px;color:#c4c4c4;font-weight:normal;letter-spacing:0.58px;">Line Spacing</span>
<div style="left:912px;top:611px;width:411px;height:21.5px;background:#2a2a2a;border:1px solid #212121;border-top-color:#141414;box-sizing:border-box;border-radius:3px;"></div>
<span class="t" style="left:916.5px;top:614.42px;font-size:15px;line-height:17.23px;color:#d6d6d6;font-weight:normal;letter-spacing:0.58px;">1</span>
<span class="t" style="left:658px;top:638.42px;font-size:15px;line-height:17.23px;color:#c4c4c4;font-weight:normal;letter-spacing:0.58px;">Rich Text</span>
<div style="left:912px;top:638px;width:17px;height:18px;background:#2a2a2a;border:1px solid #212121;border-top-color:#141414;box-sizing:border-box;border-radius:3px;"></div>
<svg style="left:912px;top:638px;" width="17" height="18" viewBox="0 0 17 18"><path d="M4 9.5 L7.2 12.6 L13 5.6" stroke="#e6e6e6" stroke-width="2" fill="none"/></svg>
<span class="t" style="left:640px;top:663.42px;font-size:15px;line-height:17.23px;color:#d2d2d2;font-weight:bold;letter-spacing:0.35px;">Paragraph</span>
<span class="t" style="left:658px;top:688.42px;font-size:15px;line-height:17.23px;color:#c4c4c4;font-weight:normal;letter-spacing:0.58px;">Alignment</span>
<div style="left:913.2px;top:685.4px;width:72.39999999999998px;height:21.8px;background:#545454;border:1px solid #2a2a2a;box-sizing:border-box;border-radius:4px;"></div>
<div style="left:935.8px;top:685.4px;width:24.600000000000023px;height:21.8px;background:#46607e;border:1px solid #1c2a3a;border-top-color:#151515;box-sizing:border-box;"></div>
<svg style="left:0px;top:0px;pointer-events:none;" width="1330" height="989" viewBox="0 0 1330 989"><path d="M918.75 690.30 H930.25" stroke="#d0d0d0" stroke-width="1.1"/><path d="M918.75 692.85 H926.75" stroke="#9a9a9a" stroke-width="1.5"/><path d="M918.75 695.40 H930.25" stroke="#d0d0d0" stroke-width="1.1"/><path d="M918.75 697.95 H926.75" stroke="#9a9a9a" stroke-width="1.5"/><path d="M918.75 700.50 H930.25" stroke="#d0d0d0" stroke-width="1.1"/><path d="M942.35 690.30 H953.85" stroke="#e6e6e6" stroke-width="1.1"/><path d="M944.10 692.85 H952.10" stroke="#b8c4d0" stroke-width="1.5"/><path d="M942.35 695.40 H953.85" stroke="#e6e6e6" stroke-width="1.1"/><path d="M944.10 697.95 H952.10" stroke="#b8c4d0" stroke-width="1.5"/><path d="M942.35 700.50 H953.85" stroke="#e6e6e6" stroke-width="1.1"/><path d="M967.25 690.30 H978.75" stroke="#d0d0d0" stroke-width="1.1"/><path d="M970.75 692.85 H978.75" stroke="#9a9a9a" stroke-width="1.5"/><path d="M967.25 695.40 H978.75" stroke="#d0d0d0" stroke-width="1.1"/><path d="M970.75 697.95 H978.75" stroke="#9a9a9a" stroke-width="1.5"/><path d="M967.25 700.50 H978.75" stroke="#d0d0d0" stroke-width="1.1"/></svg>
<div style="left:1001.1px;top:685.4px;width:71.89999999999998px;height:21.8px;background:#545454;border:1px solid #2a2a2a;box-sizing:border-box;border-radius:4px;"></div>
<div style="left:1022.5px;top:685.4px;width:25.0px;height:21.8px;background:#46607e;border:1px solid #1c2a3a;border-top-color:#151515;box-sizing:border-box;"></div>
<svg style="left:0px;top:0px;pointer-events:none;" width="1330" height="989" viewBox="0 0 1330 989"><path d="M1006.05 690.30 H1017.55" stroke="#d0d0d0" stroke-width="1.1"/><path d="M1006.05 692.90 H1017.55" stroke="#9a9a9a" stroke-width="1.5"/><path d="M1006.05 695.50 H1017.55" stroke="#d0d0d0" stroke-width="1.1"/><path d="M1029.25 692.90 H1040.75" stroke="#e6e6e6" stroke-width="1.1"/><path d="M1029.25 695.50 H1040.75" stroke="#b8c4d0" stroke-width="1.5"/><path d="M1029.25 698.10 H1040.75" stroke="#e6e6e6" stroke-width="1.1"/><path d="M1054.50 695.50 H1066.00" stroke="#d0d0d0" stroke-width="1.1"/><path d="M1054.50 698.10 H1066.00" stroke="#9a9a9a" stroke-width="1.5"/><path d="M1054.50 700.70 H1066.00" stroke="#d0d0d0" stroke-width="1.1"/></svg>
<span class="t" style="left:658px;top:713.42px;font-size:15px;line-height:17.23px;color:#c4c4c4;font-weight:normal;letter-spacing:0.58px;">Align By Geometry</span>
<div style="left:912px;top:713px;width:17px;height:18px;background:#2a2a2a;border:1px solid #212121;border-top-color:#141414;box-sizing:border-box;border-radius:3px;"></div>
<span class="t" style="left:658px;top:738.42px;font-size:15px;line-height:17.23px;color:#c4c4c4;font-weight:normal;letter-spacing:0.58px;">Horizontal Overflow</span>
<div style="left:912px;top:736px;width:411px;height:21.5px;background:#515151;border:1px solid #2b2b2b;box-sizing:border-box;border-radius:3px;border-top-color:#585858;"></div>
<svg style="left:1307px;top:743.75px;" width="9.5" height="6" viewBox="0 0 9.5 6"><path d="M0 0 L9.5 0 L4.75 6 Z" fill="#c4c4c4"/></svg>
<span class="t" style="left:917px;top:738.42px;font-size:15px;line-height:17.23px;color:#d2d2d2;font-weight:normal;letter-spacing:0.58px;">Wrap</span>
<span class="t" style="left:658px;top:763.42px;font-size:15px;line-height:17.23px;color:#c4c4c4;font-weight:normal;letter-spacing:0.58px;">Vertical Overflow</span>
<div style="left:912px;top:761px;width:411px;height:21.5px;background:#515151;border:1px solid #2b2b2b;box-sizing:border-box;border-radius:3px;border-top-color:#585858;"></div>
<svg style="left:1307px;top:768.75px;" width="9.5" height="6" viewBox="0 0 9.5 6"><path d="M0 0 L9.5 0 L4.75 6 Z" fill="#c4c4c4"/></svg>
<span class="t" style="left:917px;top:763.42px;font-size:15px;line-height:17.23px;color:#d2d2d2;font-weight:normal;letter-spacing:0.58px;">Truncate</span>
<span class="t" style="left:658px;top:788.42px;font-size:15px;line-height:17.23px;color:#c4c4c4;font-weight:normal;letter-spacing:0.58px;">Best Fit</span>
<div style="left:912px;top:788px;width:17px;height:18px;background:#2a2a2a;border:1px solid #212121;border-top-color:#141414;box-sizing:border-box;border-radius:3px;"></div>
<span class="t" style="left:640px;top:811.42px;font-size:15px;line-height:17.23px;color:#c4c4c4;font-weight:normal;letter-spacing:0.58px;">Color</span>
<div style="left:912px;top:808.3px;width:411.4px;height:22px;background:#333333;border:1px solid #1f1f1f;box-sizing:border-box;border-radius:3px;"></div>
<div style="left:913px;top:809px;width:388px;height:20.3px;background:#ffffff;"></div>
<svg style="left:1302px;top:809px;" width="20" height="20" viewBox="0 0 20 20"><path d="M5.2 15.8 L11 10" stroke="#cfcfcf" stroke-width="3.6" stroke-linecap="round"/><path d="M6 15 L10.6 10.4" stroke="#333" stroke-width="1.2"/><path d="M10.5 6.5 L14 10 M12.5 7.5 L16 4" stroke="#cfcfcf" stroke-width="3.2" stroke-linecap="round"/></svg>
<span class="t" style="left:640px;top:836.42px;font-size:15px;line-height:17.23px;color:#c4c4c4;font-weight:normal;letter-spacing:0.58px;">Material</span>
<div style="left:912px;top:834px;width:411px;height:21.6px;background:#2a2a2a;border:1px solid #212121;border-top-color:#141414;box-sizing:border-box;border-radius:3px;"></div>
<div style="left:1300px;top:835px;width:22.5px;height:19.6px;background:#333333;border-radius:0 3px 3px 0;"></div>
<svg style="left:1304px;top:836px;" width="15" height="15" viewBox="0 0 15 15"><circle cx="7.5" cy="7.5" r="5.9" stroke="#c8c8c8" stroke-width="1.4" fill="none"/><rect x="5.6" y="5.6" width="3.8" height="3.8" fill="#d0d0d0"/></svg>
<span class="t" style="left:916px;top:836.42px;font-size:15px;line-height:17.23px;color:#d6d6d6;font-weight:normal;letter-spacing:0.5px;">None (Material)</span>
<span class="t" style="left:640px;top:861.42px;font-size:15px;line-height:17.23px;color:#c4c4c4;font-weight:normal;letter-spacing:0.58px;">Raycast Target</span>
<div style="left:912px;top:860px;width:17px;height:18px;background:#2a2a2a;border:1px solid #212121;border-top-color:#141414;box-sizing:border-box;border-radius:3px;"></div>
<svg style="left:912px;top:860px;" width="17" height="18" viewBox="0 0 17 18"><path d="M4 9.5 L7.2 12.6 L13 5.6" stroke="#e6e6e6" stroke-width="2" fill="none"/></svg>
<svg style="left:626px;top:889px;" width="9" height="11" viewBox="0 0 9 11"><path d="M0 0.5 L8.5 5.5 L0 10.5 Z" fill="#7a7a7a"/></svg>
<span class="t" style="left:640px;top:885.92px;font-size:15px;line-height:17.23px;color:#c4c4c4;font-weight:normal;letter-spacing:0.58px;">Raycast Padding</span>
<span class="t" style="left:640px;top:913.42px;font-size:15px;line-height:17.23px;color:#c4c4c4;font-weight:normal;letter-spacing:0.58px;">Maskable</span>
<div style="left:912px;top:913px;width:17px;height:18px;background:#2a2a2a;border:1px solid #212121;border-top-color:#141414;box-sizing:border-box;border-radius:3px;"></div>
<svg style="left:912px;top:913px;" width="17" height="18" viewBox="0 0 17 18"><path d="M4 9.5 L7.2 12.6 L13 5.6" stroke="#e6e6e6" stroke-width="2" fill="none"/></svg>
<div style="left:616px;top:943px;width:714px;height:1px;background:#1e1e1e;"></div>
<div style="left:616px;top:944px;width:714px;height:45px;background:#3e3e3e;"></div>
<div style="left:636px;top:952px;width:40px;height:37px;background:#505050;"></div>
<div style="left:640.5px;top:956.6px;width:31px;height:30.5px;background:#ffffff;"></div>
<span class="t" style="left:685px;top:951.52px;font-size:16px;line-height:18.38px;color:#b4b4b4;font-weight:normal;letter-spacing:0.73px;">Default UI Material (Material)</span>
<svg style="left:1292px;top:954px;" width="13" height="13" viewBox="0 0 13 13"><circle cx="6.3" cy="6.2" r="6.2" fill="#cacaca"/><path d="M4.1 4.6 C4.1 1.9 8.6 1.9 8.6 4.4 C8.6 6 6.4 6 6.4 8" stroke="#3a3a3a" stroke-width="2" fill="none"/><rect x="5.3" y="9" width="2.2" height="2" fill="#3a3a3a"/></svg>
<svg style="left:1317px;top:954px;" width="4" height="13" viewBox="0 0 4 13"><g fill="#c4c4c4"><circle cx="2" cy="1.8" r="1.6"/><circle cx="2" cy="6.5" r="1.6"/><circle cx="2" cy="11.2" r="1.6"/></g></svg>
<span class="t" style="left:683px;top:981.42px;font-size:15px;line-height:17.23px;color:#8a8a8a;font-weight:normal;letter-spacing:0.58px;">Shader</span>
<div style="left:747px;top:981px;width:514px;height:20px;background:#4a4a4a;border-radius:3px;"></div>
<span class="t" style="left:752px;top:982.42px;font-size:15px;line-height:17.23px;color:#9a9a9a;font-weight:normal;letter-spacing:0.58px;">UI/Default</span>
<div style="left:1267px;top:981px;width:55px;height:20px;background:#4a4a4a;border-radius:3px;"></div>
<span class="t" style="left:1272px;top:982.42px;font-size:15px;line-height:17.23px;color:#8a8a8a;font-weight:normal;letter-spacing:0.58px;">Edit...</span>
<svg style="left:0px;top:0px;pointer-events:none;" width="1330" height="989" viewBox="0 0 1330 989"><path d="M902.6 604.3 C 902.6 600, 902.3 597, 903.5 594 C 905 590, 912 585.5, 917 583 C 922 580.5, 928 579.4, 932 579.6 C 936 579.6, 939 579.8, 941 580.8 C 945 583, 948 585.5, 950 586.8 C 954 589.5, 956.5 592, 956.8 596 C 957.3 600, 957 604, 955 608.5 C 953 611, 950 612, 947 612.5 C 941 614, 936 614.2, 932 614 C 925 614, 919 613.7, 914 613.3 C 909 613, 905 612, 902.6 610.3" stroke="#e41c1c" stroke-width="3.5" fill="none" stroke-linecap="round"/><path d="M906.4 717.4 L1059 717.4 C 1064 717.4, 1068 715.2, 1076.4 715" stroke="#e41c1c" stroke-width="3.5" fill="none" stroke-linecap="round"/></svg>
</body></html>
